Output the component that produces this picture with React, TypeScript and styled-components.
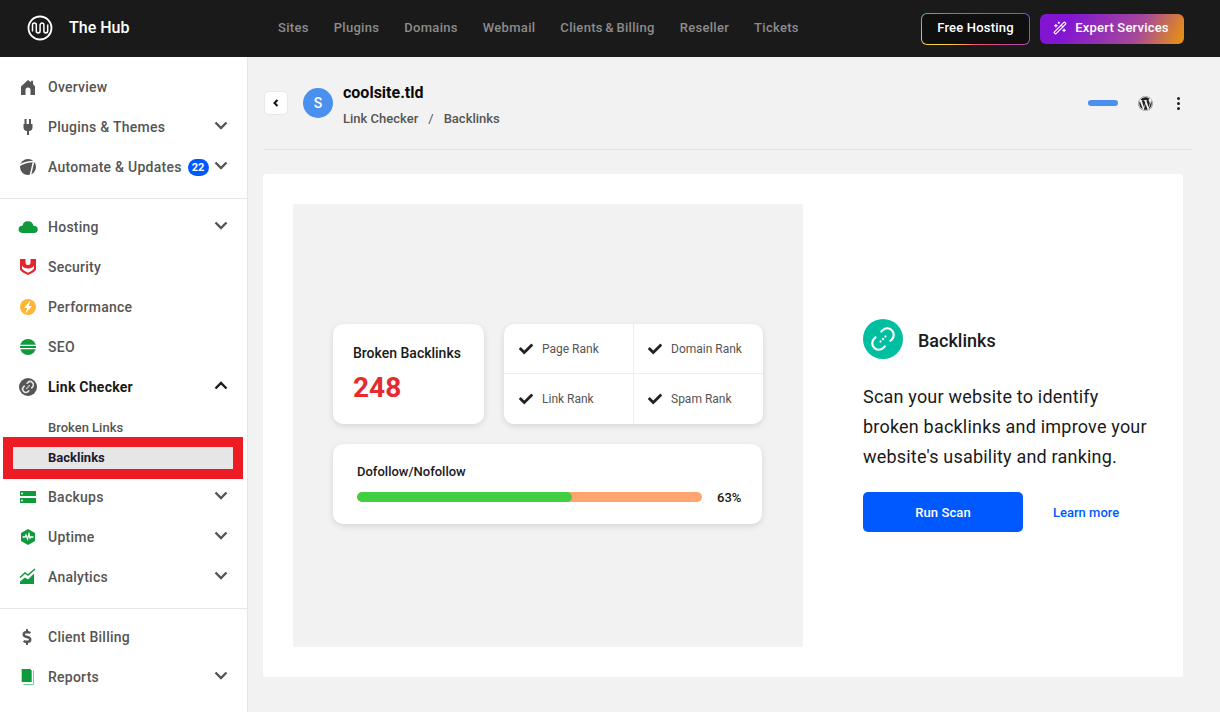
import React from 'react';
import styled, {createGlobalStyle} from 'styled-components';
import {WandSparkles} from 'lucide-react';
import {FaCheck, FaDollarSign, FaWordpress} from 'react-icons/fa';

const GREEN = '#0f9a3c';
const GREY = '#555555';

const GlobalStyle = createGlobalStyle`
  html, body {
    margin: 0;
    height: 100%;
    background: #f2f2f2;
    font-family: Roboto, "Liberation Sans", sans-serif;
  }
  * {
    box-sizing: border-box;
  }
`;

const Icon = ({children}: {children: React.ReactNode}) => (
  <svg width={20} height={20} viewBox='0 0 20 20'>{children}</svg>
);

const HomeIcon = () => (
  <Icon><path fill={GREY} d='M10 3l3 2.2V3.8h2V7l2 2.5V18h-4.500v-5a2.500 2.500 0 0 0-5 0v5H3V9.500z'/></Icon>
);

const PlugIcon = () => (
  <Icon><path fill={GREY} d='M6.500 2h2v5h2.500V2h2v5H14.500v3.200q0 3.300-3.500 3.900V18H9v-3.900q-3.500-.6-3.500-3.900V7h1z'/></Icon>
);

const AutomateIcon = () => (
  <Icon>
    <circle cx={10} cy={10} r={8} fill={GREY}/>
    <path fill='none' stroke='#fff' strokeWidth={1.500} d='M1.500 8.500Q8 4 18.500 4.500M15.500 5l-3.300 14'/>
  </Icon>
);

const CloudIcon = () => (
  <Icon><path fill={GREEN} d='M4 16a4 4 0 0 1-3.500-3.700A3.800 3.800 0 0 1 4.500 8.800 5.300 5.300 0 0 1 10 4.300a5.300 5.300 0 0 1 5.300 4.500 3.700 3.700 0 0 1 4.500 3.500A3.800 3.800 0 0 1 16 16z'/></Icon>
);

const ShieldIcon = () => (
  <Icon>
    <path fill='#e5252d' d='M2 2h5.500v3.500a2.500 2.500 0 0 0 5 0V2H18v10.500q-1 2.500-8 5.500-7-3-8-5.500z'/>
    <path fill='#fff' d='M4 8.500q1.500 3 6 3t6-3v3.300q-1.500 2-6 3.900-4.500-1.900-6-3.900z'/>
  </Icon>
);

const BoltIcon = () => (
  <Icon>
    <circle cx={10} cy={10} r={8} fill='#ffb636'/>
    <path fill='#fff' d='M12.500 3.500L6 11h3.200L7.500 16.500 14 9h-3.200z'/>
  </Icon>
);

const SeoIcon = () => (
  <Icon>
    <circle cx={10} cy={10} r={8} fill={GREEN}/>
    <path stroke='#fff' strokeWidth={1.200} d='M1 8.300h18M1 11.700h18'/>
  </Icon>
);

const LinkShape = ({color, width}: {color: string; width: number}) => (
  <g transform='rotate(-45 20 20)' fill='none' stroke={color} strokeWidth={width} strokeLinecap='round'>
    <path d='M16 13.500h-2a6.500 6.500 0 0 0 0 13h2M24 13.500h2a6.500 6.500 0 0 1 0 13h-2'/>
    <path d='M16.500 20h.01M20 20h.01M23.500 20h.01'/>
  </g>
);

const LinkCheckIcon = () => (
  <svg width={20} height={20} viewBox='0 0 40 40'>
    <circle cx={20} cy={20} r={18} fill={GREY}/>
    <LinkShape color='#e2e2e2' width={3.200}/>
  </svg>
);

const BackupIcon = () => (
  <Icon>
    <path fill={GREEN} d='M2 4h16v5H2zM2 11h16v5H2z'/>
    <circle cx={4} cy={6.500} r={.9} fill='#fff'/>
    <circle cx={4} cy={13.500} r={.9} fill='#fff'/>
  </Icon>
);

const UptimeIcon = () => (
  <Icon>
    <path fill={GREEN} d='M10 2l7 4v8l-7 4-7-4V6z'/>
    <path fill='none' stroke='#fff' strokeWidth={1.300} d='M4.500 10h2.500l1-2 1.500 4 1.500-5 1 4 .8-1h2.700'/>
  </Icon>
);

const ChartIcon = () => (
  <Icon>
    <path fill={GREEN} d='M2 14.500l5-4 3 2 6-6V17H2z'/>
    <path fill='none' stroke={GREEN} strokeWidth={1.500} d='M2 10.500l5-4.500 3 2 7-6'/>
  </Icon>
);

const DollarGlyph = styled(FaDollarSign)`
  width: 16px;
  height: 16px;
  margin: 2px 0 0 1px;
  color: ${GREY};
`;

const BookIcon = () => (
  <Icon>
    <path fill='none' stroke='#6fcf8e' strokeWidth={1} d='M15.500 3.500v14H5.500'/>
    <path fill={GREEN} d='M3.700 2h8.500l1.500 1.500V15H3.700z'/>
  </Icon>
);

const menuTop = [
  {label: 'Overview', icon: <HomeIcon/>},
  {label: 'Plugins & Themes', icon: <PlugIcon/>, more: true},
  {label: 'Automate & Updates', icon: <AutomateIcon/>, more: true, badge: '22'},
];

const menuMiddleA = [
  {label: 'Hosting', icon: <CloudIcon/>, more: true},
  {label: 'Security', icon: <ShieldIcon/>},
  {label: 'Performance', icon: <BoltIcon/>},
  {label: 'SEO', icon: <SeoIcon/>},
];

const menuMiddleB = [
  {label: 'Backups', icon: <BackupIcon/>, more: true},
  {label: 'Uptime', icon: <UptimeIcon/>, more: true},
  {label: 'Analytics', icon: <ChartIcon/>, more: true},
];

const menuBottom = [
  {label: 'Client Billing', icon: <DollarGlyph/>},
  {label: 'Reports', icon: <BookIcon/>, more: true},
];

const topLinks = ['Sites', 'Plugins', 'Domains', 'Webmail', 'Clients & Billing', 'Reseller', 'Tickets'];

type Item = {label: string; icon: React.ReactNode; more?: boolean; badge?: string};

const Chevron = ({up}: {up?: boolean}) => (
  <ChevronSvg width={14} height={9} viewBox='0 0 14 9'>
    <path fill='none' stroke={up ? '#1a1a1a' : GREY} strokeWidth={2.400} d={up ? 'M1.500 7.500L7 2l5.500 5.500' : 'M1.500 1.500L7 7l5.500-5.500'}/>
  </ChevronSvg>
);

const MenuRow = ({item}: {item: Item}) => (
  <Row>
    <IconBox>{item.icon}</IconBox>
    <RowLabel>{item.label}</RowLabel>
    {item.badge && <Badge>{item.badge}</Badge>}
    {item.more && <Chevron/>}
  </Row>
);

const Logo = () => (
  <svg width={26} height={26} viewBox='0 0 26 26'>
    <circle cx={13} cy={13} r={11.500} fill='none' stroke='#fff' strokeWidth={1.800}/>
    <path
      fill='none'
      stroke='#fff'
      strokeWidth={1.500}
      d='M5.500 16.500V10a1.900 1.900 0 0 1 3.800 0v6a1.900 1.900 0 0 0 3.800 0v-6a1.900 1.900 0 0 1 3.800 0v6a1.900 1.900 0 0 0 3.800 0V9.500'
    />
  </svg>
);

export default function App() {
  return (
    <Page>
      <GlobalStyle/>
      <Header>
        <Brand>
          <Logo/>
          <BrandName>The Hub</BrandName>
        </Brand>
        <TopNav>
          {topLinks.map(link => <TopLink key={link}>{link}</TopLink>)}
        </TopNav>
        <HeaderActions>
          <FreeButton>Free Hosting</FreeButton>
          <ExpertButton><WandSparkles size={14}/>Expert Services</ExpertButton>
        </HeaderActions>
      </Header>

      <Body>
        <Sidebar>
          <MenuGroup>
            {menuTop.map(item => <MenuRow key={item.label} item={item}/>)}
          </MenuGroup>
          <MenuGroup>
            {menuMiddleA.map(item => <MenuRow key={item.label} item={item}/>)}
            <Row>
              <IconBox><LinkCheckIcon/></IconBox>
              <RowLabel $active>Link Checker</RowLabel>
              <Chevron up/>
            </Row>
            <SubList>
              <SubItem>Broken Links</SubItem>
              <SubItem $active>Backlinks</SubItem>
            </SubList>
            {menuMiddleB.map(item => <MenuRow key={item.label} item={item}/>)}
          </MenuGroup>
          <MenuGroup>
            {menuBottom.map(item => <MenuRow key={item.label} item={item}/>)}
          </MenuGroup>
        </Sidebar>

        <Main>
          <TopBar>
            <BackButton>
              <svg width={8} height={8} viewBox='0 0 8 8'>
                <path fill='none' stroke='#111' strokeWidth={2} d='M5.500 1L2.500 4l3 3'/>
              </svg>
            </BackButton>
            <Avatar>S</Avatar>
            <SiteInfo>
              <SiteName>coolsite.tld</SiteName>
              <Crumbs>
                <span>Link Checker</span>
                <CrumbSep>/</CrumbSep>
                <span>Backlinks</span>
              </Crumbs>
            </SiteInfo>
            <TopBarTools>
              <StatusPill/>
              <FaWordpress size={15} color='#222'/>
              <Dots><i/><i/><i/></Dots>
            </TopBarTools>
          </TopBar>

          <Card>
            <Preview>
              <PreviewColumn>
                <PreviewRow>
                  <BrokenCard>
                    <BrokenTitle>Broken Backlinks</BrokenTitle>
                    <BrokenCount>248</BrokenCount>
                  </BrokenCard>
                  <RankGrid>
                    {['Page Rank', 'Domain Rank', 'Link Rank', 'Spam Rank'].map(rank => (
                      <RankCell key={rank}>
                        <FaCheck size={14} color='#222'/>
                        <span>{rank}</span>
                      </RankCell>
                    ))}
                  </RankGrid>
                </PreviewRow>
                <RatioCard>
                  <RatioTitle>Dofollow/Nofollow</RatioTitle>
                  <RatioRow>
                    <RatioTrack><RatioFill style={{width: '62.300%'}}/></RatioTrack>
                    <RatioValue>63%</RatioValue>
                  </RatioRow>
                </RatioCard>
              </PreviewColumn>
            </Preview>

            <Intro>
              <IntroHead>
                <IntroIcon>
                  <svg width={40} height={40} viewBox='0 0 40 40'>
                    <LinkShape color='#fff' width={2.200}/>
                  </svg>
                </IntroIcon>
                <IntroTitle>Backlinks</IntroTitle>
              </IntroHead>
              <IntroText>
                Scan your website to identify broken backlinks and improve your website's usability and ranking.
              </IntroText>
              <IntroActions>
                <ScanButton>Run Scan</ScanButton>
                <LearnLink>Learn more</LearnLink>
              </IntroActions>
            </Intro>
          </Card>
        </Main>
      </Body>
    </Page>
  );
}

const Page = styled.div`
  width: 1220px;
  height: 712px;
  overflow: hidden;
  display: flex;
  flex-direction: column;
`;

const Header = styled.header`
  height: 57px;
  flex: none;
  background: #1a1a1a;
  display: flex;
  align-items: center;
  padding: 0 36px 0 27px;
`;

const Brand = styled.div`
  width: 251px;
  display: flex;
  align-items: center;
  gap: 16px;
  padding-bottom: 1px;
`;

const BrandName = styled.div`
  color: #fff;
  font-size: 16px;
  font-weight: 500;
  padding-bottom: 1px;
`;

const TopNav = styled.nav`
  display: flex;
  gap: 25px;
  padding-bottom: 2px;
`;

const TopLink = styled.a`
  color: #8c8c8c;
  font-size: 13px;
  font-weight: 500;
  letter-spacing: 0.3px;
  word-spacing: -1px;
`;

const HeaderActions = styled.div`
  margin-left: auto;
  display: flex;
  align-items: center;
  gap: 10px;
`;

const FreeButton = styled.div`
  width: 109px;
  height: 32px;
  padding-bottom: 2px;
  display: flex;
  align-items: center;
  justify-content: center;
  color: #fff;
  font-size: 13px;
  font-weight: 500;
  letter-spacing: 0.2px;
  border: 1px solid transparent;
  border-radius: 6px;
  background:
    linear-gradient(#0f0f0f, #0f0f0f) padding-box,
    conic-gradient(from 300deg, #2ba58f, #1e90d8 20%, #8a4fd0 38%, #e0487a 55%, #ee5a70 68%, #ffd93b 85%, #2ba58f) border-box;
`;

const ExpertButton = styled.div`
  width: 144px;
  height: 30px;
  padding: 0 2px 2px 0;
  display: flex;
  align-items: center;
  justify-content: center;
  gap: 8px;
  color: #fff;
  font-size: 13px;
  font-weight: 500;
  letter-spacing: 0.2px;
  border-radius: 6px;
  background: linear-gradient(115deg, #8215d2 20%, #a64a98 68%, #e8920f 98%);
`;

const Body = styled.div`
  flex: 1;
  display: flex;
  min-height: 0;
`;

const Sidebar = styled.aside`
  width: 248px;
  flex: none;
  background: #fff;
  border-right: 1px solid #e6e6e6;
  padding-top: 10px;
`;

const MenuGroup = styled.div`
  padding-bottom: 11px;
  margin-bottom: 8px;
  border-bottom: 1px solid #e6e6e6;

  &:last-child {
    border-bottom: none;
  }
`;

const Row = styled.div`
  height: 40px;
  display: flex;
  align-items: center;
  padding: 0 19px 0 18px;
`;

const IconBox = styled.div`
  width: 20px;
  height: 20px;
  flex: none;
  margin-right: 10px;
  display: flex;
`;

const RowLabel = styled.span<{$active?: boolean}>`
  font-size: 14px;
  font-weight: ${p => (p.$active ? 700 : 500)};
  letter-spacing: 0.25px;
  color: ${p => (p.$active ? '#1a1a1a' : GREY)};
`;

const Badge = styled.span`
  width: 21px;
  height: 17px;
  margin-left: 6px;
  display: flex;
  align-items: center;
  justify-content: center;
  background: #0059ff;
  color: #fff;
  border-radius: 9px;
  font-size: 11px;
  font-weight: 700;
`;

const ChevronSvg = styled.svg`
  margin-left: auto;
  margin-bottom: 3px;
`;

const SubList = styled.div`
  padding-top: 5px;
`;

const SubItem = styled.div<{$active?: boolean}>`
  display: flex;
  align-items: center;
  font-size: 13px;
  font-weight: ${p => (p.$active ? 700 : 500)};
  height: ${p => (p.$active ? '22px' : '30px')};
  width: 220px;
  margin: ${p => (p.$active ? '5px 0 8px 13px' : '0 0 0 13px')};
  padding: ${p => (p.$active ? '0 0 1px 35px' : '0 0 0 35px')};
  color: ${p => (p.$active ? '#1a1a2e' : GREY)};
  background: ${p => (p.$active ? '#e6e6e6' : 'transparent')};
  outline: ${p => (p.$active ? '10px solid #ed1c24' : 'none')};
`;

const Main = styled.main`
  flex: 1;
  min-width: 0;
  padding-left: 15px;
`;

const TopBar = styled.div`
  height: 93px;
  margin: 0 28px 24px 1px;
  display: flex;
  align-items: center;
  border-bottom: 1px solid #e3e3e3;
`;

const BackButton = styled.div`
  width: 24px;
  height: 24px;
  background: #fff;
  border: 1px solid #e8e8e8;
  border-radius: 5px;
  display: flex;
  align-items: center;
  justify-content: center;
  margin-bottom: 1px;
`;

const Avatar = styled.div`
  width: 30px;
  height: 30px;
  margin-left: 15px;
  border-radius: 50%;
  background: #4a90ee;
  color: #fff;
  display: flex;
  align-items: center;
  justify-content: center;
  font-size: 14px;
  font-weight: 500;
`;

const SiteInfo = styled.div`
  margin-left: 10px;
  padding-top: 2px;
  display: flex;
  flex-direction: column;
  gap: 9px;
`;

const SiteName = styled.div`
  font-size: 16px;
  font-weight: 700;
  color: #0a0a0a;
`;

const Crumbs = styled.div`
  display: flex;
  font-size: 13px;
  font-weight: 500;
  color: ${GREY};
`;

const CrumbSep = styled.span`
  margin: 0 10px;
  font-weight: 400;
`;

const TopBarTools = styled.div`
  margin-left: auto;
  display: flex;
  align-items: center;
  gap: 20px;
  padding-right: 12px;
`;

const StatusPill = styled.div`
  width: 30px;
  height: 6px;
  border-radius: 3px;
  background: #4a90ee;
`;

const Dots = styled.div`
  display: flex;
  flex-direction: column;
  gap: 2px;
  margin-left: 4px;

  i {
    width: 3px;
    height: 3px;
    border-radius: 50%;
    background: #222;
  }
`;

const Card = styled.section`
  width: 920px;
  height: 503px;
  padding: 30px;
  display: flex;
  background: #fff;
  border-radius: 3px;
`;

const Preview = styled.div`
  width: 510px;
  flex: none;
  background: #f2f2f2;
  border-radius: 2px;
  display: flex;
  align-items: center;
  padding: 0 0 4px 40px;
`;

const PreviewColumn = styled.div`
  width: 430px;
  display: flex;
  flex-direction: column;
  gap: 20px;
`;

const PreviewRow = styled.div`
  display: flex;
  gap: 20px;
`;

const BrokenCard = styled.div`
  width: 151px;
  height: 100px;
  padding: 21px 20px 0;
  background: #fff;
  border-radius: 10px;
  box-shadow: 0 2px 6px rgba(0, 0, 0, 0.12);
`;

const BrokenTitle = styled.div`
  font-size: 14px;
  font-weight: 500;
  color: #1a1a1a;
`;

const BrokenCount = styled.div`
  margin-top: 10px;
  font-size: 28px;
  font-weight: 700;
  color: #e52b2f;
`;

const RankGrid = styled.div`
  width: 259px;
  height: 100px;
  display: grid;
  grid-template-columns: 130px 129px;
  grid-template-rows: 50px 50px;
  background: #fff;
  border-radius: 10px;
  box-shadow: 0 2px 6px rgba(0, 0, 0, 0.12);
`;

const RankCell = styled.div`
  display: flex;
  align-items: center;
  gap: 9px;
  padding: 1px 0 0 15px;
  font-size: 12px;
  color: ${GREY};

  &:nth-child(odd) {
    border-right: 1px solid #eeeeee;
  }
  &:nth-child(even) {
    padding-left: 14px;
  }
  &:nth-child(-n + 2) {
    border-bottom: 1px solid #eeeeee;
  }
`;

const RatioCard = styled.div`
  width: 429px;
  height: 80px;
  padding: 20px 20px 0 24px;
  background: #fff;
  border-radius: 10px;
  box-shadow: 0 2px 6px rgba(0, 0, 0, 0.12);
`;

const RatioTitle = styled.div`
  font-size: 13px;
  font-weight: 500;
  color: #1a1a1a;
`;

const RatioRow = styled.div`
  margin-top: 11px;
  display: flex;
  align-items: center;
  gap: 15px;
`;

const RatioTrack = styled.div`
  width: 345px;
  height: 10px;
  border-radius: 5px;
  background: #ffa46e;
  overflow: hidden;
`;

const RatioFill = styled.div`
  height: 100%;
  border-radius: 5px;
  background: #40cf40;
`;

const RatioValue = styled.div`
  font-size: 13px;
  font-weight: 500;
  color: #1a1a1a;
`;

const Intro = styled.div`
  width: 290px;
  margin-left: 60px;
  align-self: center;
`;

const IntroHead = styled.div`
  display: flex;
  align-items: center;
  gap: 15px;
`;

const IntroIcon = styled.div`
  width: 40px;
  height: 40px;
  border-radius: 50%;
  background: #00bfa0;
`;

const IntroTitle = styled.div`
  font-size: 18px;
  font-weight: 500;
  color: #1a1a1a;
  padding-top: 2px;
`;

const IntroText = styled.p`
  margin: 23px 0 20px;
  font-size: 18px;
  line-height: 30px;
  letter-spacing: 0.2px;
  color: #1a1a1a;
`;

const IntroActions = styled.div`
  display: flex;
  align-items: center;
  gap: 30px;
`;

const ScanButton = styled.div`
  width: 160px;
  height: 40px;
  display: flex;
  align-items: center;
  justify-content: center;
  background: #0059ff;
  color: #fff;
  border-radius: 5px;
  font-size: 13px;
  font-weight: 500;
  letter-spacing: 0.1px;
`;

const LearnLink = styled.a`
  color: #0059ff;
  font-size: 13px;
  font-weight: 500;
`;
